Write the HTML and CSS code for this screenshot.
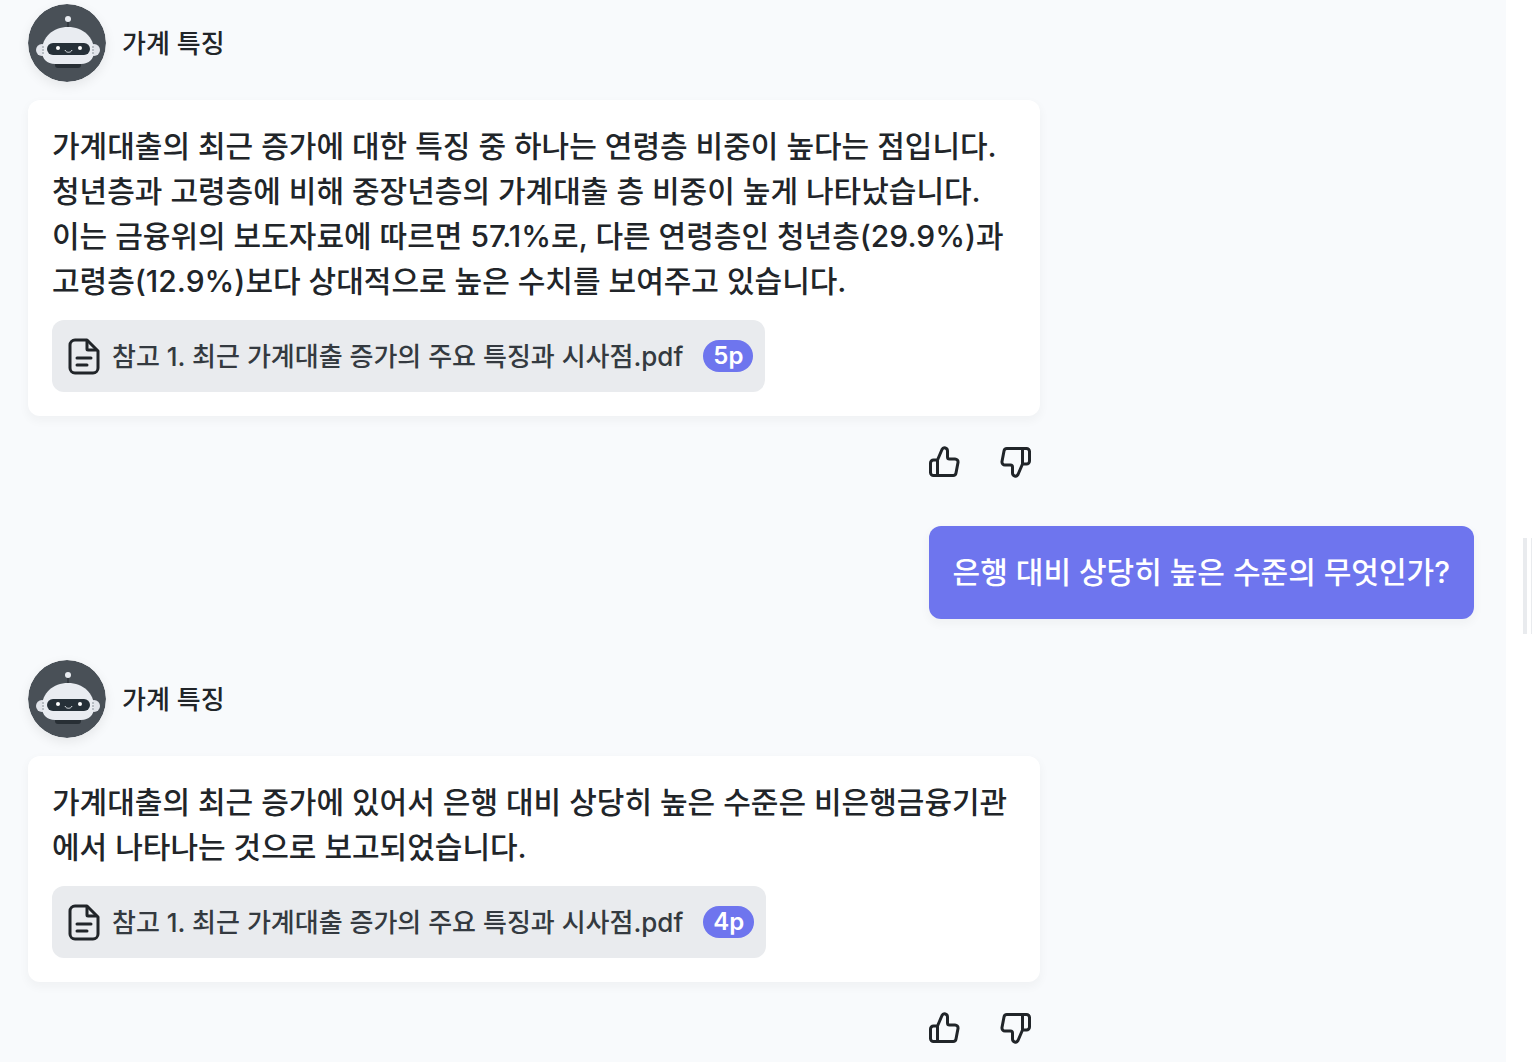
FILE: index.html
```html
<!DOCTYPE html>
<html lang="ko">
<head>
    <meta charset="UTF-8">
    <meta name="viewport" content="width=device-width, initial-scale=1.0">
    <title>가계 특징</title>
    <link rel="stylesheet" href="styles.css">
</head>
<body>
    <!-- shared icons -->
    <svg class="sprite" aria-hidden="true">
        <symbol id="bot" viewBox="0 0 78 78">
            <circle cx="39" cy="39" r="39" fill="#495057"/>
            <path d="M40 16v11" stroke="#343a40" stroke-width="2"/>
            <circle cx="40" cy="15" r="3" fill="#e9ecf1"/>
            <path d="M27 57h26v4a3 3 0 0 1-3 3H30a3 3 0 0 1-3-3z" fill="#282f35"/>
            <circle cx="14" cy="46" r="6" fill="#e1e4ea"/>
            <circle cx="66" cy="46" r="6" fill="#e1e4ea"/>
            <path d="M14 47C14 33 25 23 40 23s26 10 26 24c0 8-5 13-13 13H27c-8 0-13-5-13-13z" fill="#e9ecf1"/>
            <path d="M15 42v8M65 42v8" stroke="#868e96" stroke-width="1" stroke-dasharray="2 1"/>
            <rect x="19" y="39" width="43" height="12" rx="6" fill="#263038"/>
            <circle cx="30" cy="44" r="2" fill="#fff"/>
            <circle cx="52" cy="44" r="2" fill="#fff"/>
            <path d="M37 46c1 3 6 3 7 0" fill="none" stroke="#dee2e6" stroke-width="1"/>
        </symbol>
        <symbol id="file" viewBox="0 0 32 38">
            <path d="M7 3h12l11 11v17a5 5 0 0 1-5 5H7a5 5 0 0 1-5-5V8a5 5 0 0 1 5-5z"/>
            <path d="M19 4v8a1 1 0 0 0 1 1h8M9 21h14M9 28h10"/>
        </symbol>
        <symbol id="thumb" viewBox="0 0 32 32">
            <path d="M9.500 14H5.500a3 3 0 0 0-3 3v9.500a3 3 0 0 0 3 3H25a3 3 0 0 0 3-2.500l2-10.500a3 3 0 0 0-3-3.500h-5.500a2 2 0 0 1-2-2V5c0-3-4-4.500-5.500-1.500L9.500 14v15.500"/>
        </symbol>
    </svg>

    <div class="layout">
        <main class="chat">
            <section class="answer">
                <header class="sender">
                    <svg class="avatar" aria-hidden="true"><use href="#bot"/></svg>
                    <span>가계 특징</span>
                </header>
                <div class="card">
                    <p>가계대출의 최근 증가에 대한 특징 중 하나는 연령층 비중이 높다는 점입니다.<br>
                        청년층과 고령층에 비해 중장년층의 가계대출 층 비중이 높게 나타났습니다.<br>
                        이는 금융위의 보도자료에 따르면 57.1%로, 다른 연령층인 청년층(29.9%)과<br>
                        고령층(12.9%)보다 상대적으로 높은 수치를 보여주고 있습니다.</p>
                    <a class="source" href="#">
                        <svg class="file-icon" aria-hidden="true"><use href="#file"/></svg>
                        <span>참고 1. 최근 가계대출 증가의 주요 특징과 시사점.pdf</span>
                        <span class="page">5p</span>
                    </a>
                </div>
                <div class="feedback">
                    <button type="button" aria-label="좋아요"><svg><use href="#thumb"/></svg></button>
                    <button type="button" class="down" aria-label="싫어요"><svg><use href="#thumb"/></svg></button>
                </div>
            </section>

            <p class="question">은행 대비 상당히 높은 수준의 무엇인가?</p>

            <section class="answer">
                <header class="sender">
                    <svg class="avatar" aria-hidden="true"><use href="#bot"/></svg>
                    <span>가계 특징</span>
                </header>
                <div class="card">
                    <p>가계대출의 최근 증가에 있어서 은행 대비 상당히 높은 수준은 비은행금융기관<br>에서 나타나는 것으로 보고되었습니다.</p>
                    <a class="source" href="#">
                        <svg class="file-icon" aria-hidden="true"><use href="#file"/></svg>
                        <span>참고 1. 최근 가계대출 증가의 주요 특징과 시사점.pdf</span>
                        <span class="page">4p</span>
                    </a>
                </div>
                <div class="feedback">
                    <button type="button" aria-label="좋아요"><svg><use href="#thumb"/></svg></button>
                    <button type="button" class="down" aria-label="싫어요"><svg><use href="#thumb"/></svg></button>
                </div>
            </section>
        </main>
        <div class="rail">
            <div class="handle"></div>
        </div>
    </div>
</body>
</html>
```
FILE: styles.css
```css
* {
    box-sizing: border-box;
}

body {
    margin: 0;
    background-color: #fff;
    color: #212529;
    font-family: Inter, 'Noto Sans CJK KR', sans-serif;
    font-size: 30px;
    font-weight: 500;
    line-height: 45px;
}

p {
    margin: 0;
}

.sprite {
    display: none;
}

.layout {
    display: flex;
    min-height: 100vh;
}

.chat {
    flex: 1;
    display: flex;
    flex-direction: column;
    gap: 41px;
    padding: 4px 32px 16px 28px;
    background-color: #f8fafc;
}

.answer {
    width: 70%;
}

.sender {
    display: flex;
    align-items: center;
    gap: 16px;
    margin-bottom: 18px;
    font-size: 26px;
}

.avatar {
    width: 78px;
    height: 78px;
    border-radius: 50%;
    box-shadow: 0 4px 12px rgba(0, 0, 0, 0.08);
}

.card {
    padding: 24px;
    background-color: #fff;
    border-radius: 12px;
    box-shadow: 0 4px 8px 2px rgba(0, 0, 0, 0.03);
}

.source {
    display: inline-flex;
    align-items: center;
    height: 72px;
    margin-top: 16px;
    padding: 0 12px 0 16px;
    background-color: #e9ebee;
    border-radius: 12px;
    color: #343a40;
    font-size: 26px;
    text-decoration: none;
    vertical-align: top;
}

.file-icon {
    width: 32px;
    height: 38px;
    margin-right: 12px;
    fill: none;
    stroke: #212529;
    stroke-width: 3px;
    stroke-linecap: round;
    stroke-linejoin: round;
}

.page {
    margin-left: 20px;
    padding: 0 10px;
    border-radius: 16px;
    background-color: #6e75ee;
    color: #fff;
    font-size: 24px;
    font-weight: 600;
    line-height: 32px;
}

.feedback {
    display: flex;
    justify-content: flex-end;
    gap: 40px;
    padding: 30px 8px 0 0;
}

.feedback button {
    width: 32px;
    height: 32px;
    padding: 0;
    border: 0;
    background: none;
    cursor: pointer;
}

.feedback svg {
    display: block;
    width: 32px;
    height: 32px;
    fill: none;
    stroke: #212529;
    stroke-width: 3px;
    stroke-linejoin: round;
}

.feedback .down {
    transform: rotate(180deg);
}

.question {
    align-self: flex-end;
    margin-top: 7px;
    padding: 24px;
    border-radius: 12px;
    background-color: #6e75ee;
    box-shadow: 0 4px 8px 2px rgba(0, 0, 0, 0.03);
    color: #fff;
}

.rail {
    display: flex;
    align-items: center;
    justify-content: flex-end;
    width: 26px;
    padding-top: 110px;
}

.handle {
    width: 9px;
    height: 96px;
    border-left: 4px solid #e9ebee;
    border-right: 1px solid #e9ebee;
}
```
